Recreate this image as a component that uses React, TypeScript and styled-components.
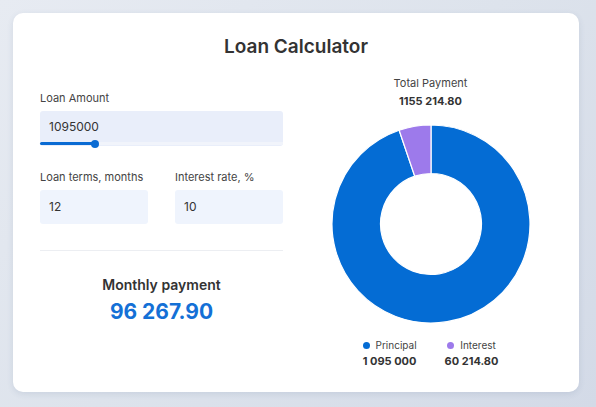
import React from "react";
import styled, { createGlobalStyle } from "styled-components";

const GlobalStyle = createGlobalStyle`
  html, body { margin: 0; padding: 0; }
  body {
    width: 596px;
    height: 407px;
    overflow: hidden;
    background: linear-gradient(135deg, #e7ebf2 0%, #dde3ec 50%, #d3dae7 100%);
    font-family: Inter, "Open Sans", sans-serif;
    color: #333;
  }
  * { box-sizing: border-box; }
`;

const Page = styled.div`
  padding: 13px 17px 15px 13px;
`;

const Card = styled.div`
  width: 566px;
  height: 379px;
  background: #fff;
  border-radius: 10px;
  box-shadow: 0 2px 6px rgba(60, 80, 120, 0.12);
  padding: 20px 27px 0 27px;
`;

const Title = styled.h1`
  margin: 0 0 14px 0;
  font-size: 19px;
  line-height: 28px;
  font-weight: 600;
  text-align: center;
  color: #333;
`;

const Columns = styled.div`
  display: grid;
  grid-template-columns: 243px 243px;
  column-gap: 26px;
`;

const Left = styled.div`
  padding-top: 15px;
  display: flex;
  flex-direction: column;
`;

const Label = styled.label`
  display: block;
  font-size: 11px;
  line-height: 16px;
  color: #444;
  margin-bottom: 5px;
`;

const FieldWrap = styled.div`
  position: relative;
`;

const Input = styled.div<{ $h: number; $bg: string }>`
  height: ${(p) => p.$h}px;
  background: ${(p) => p.$bg};
  border-radius: 3px;
  padding: 0 9px;
  display: flex;
  align-items: center;
  font-size: 12px;
  color: #333;
  padding-bottom: ${(p) => (p.$h > 34 ? 4 : 1)}px;
`;

const SliderTrack = styled.div`
  position: absolute;
  left: 0;
  right: 0;
  bottom: 1px;
  height: 3px;
  background: #f1f4fb;
`;

const SliderFill = styled.div`
  position: absolute;
  left: 0;
  top: 0;
  height: 3px;
  background: #0a6bd3;
  border-radius: 2px;
`;

const Thumb = styled.div`
  position: absolute;
  top: 50%;
  width: 8px;
  height: 8px;
  margin-left: -4px;
  margin-top: -4px;
  border-radius: 50%;
  background: #0a6bd3;
`;

const Row = styled.div`
  display: grid;
  grid-template-columns: 108px 108px;
  column-gap: 27px;
  margin-top: 23px;
`;

const Divider = styled.hr`
  border: none;
  border-top: 1px solid #eceef2;
  margin: 26px 0 0 0;
`;

const Result = styled.div`
  text-align: center;
  padding-top: 25px;
`;

const ResultLabel = styled.div`
  font-size: 14px;
  line-height: 18px;
  font-weight: 600;
  color: #333;
`;

const ResultValue = styled.div`
  font-size: 21px;
  line-height: 28px;
  font-weight: 700;
  color: #1470d6;
  margin-top: 4px;
`;

const Right = styled.div`
  display: flex;
  flex-direction: column;
  align-items: center;
`;

const SmallLabel = styled.div`
  font-size: 11px;
  line-height: 16px;
  color: #444;
`;

const SmallValue = styled.div`
  font-size: 11px;
  line-height: 16px;
  font-weight: 700;
  color: #333;
  margin-top: 2px;
`;

const ChartBox = styled.div`
  margin-top: 15px;
  width: 200px;
  height: 200px;
`;

const Legend = styled.div`
  display: flex;
  gap: 28px;
  margin-top: 14px;
`;

const LegendItem = styled.div`
  display: flex;
  flex-direction: column;
  align-items: center;
`;

const LegendKey = styled.div`
  display: flex;
  align-items: center;
  gap: 6px;
  font-size: 10px;
  line-height: 14px;
  color: #444;
`;

const Dot = styled.span<{ $c: string }>`
  width: 7px;
  height: 7px;
  border-radius: 50%;
  background: ${(p) => p.$c};
`;

const LegendValue = styled.div`
  font-size: 11px;
  line-height: 16px;
  font-weight: 700;
  color: #333;
  margin-top: 1px;
`;

const BLUE = "#046cd4";
const PURPLE = "#9d7aeb";

function arc(cx: number, cy: number, R: number, r: number, a0: number, a1: number) {
  const rad = (d: number) => (d * Math.PI) / 180;
  const p = (rr: number, a: number) => [cx + rr * Math.sin(rad(a)), cy - rr * Math.cos(rad(a))];
  const large = a1 - a0 > 180 ? 1 : 0;
  const [x0, y0] = p(R, a0);
  const [x1, y1] = p(R, a1);
  const [x2, y2] = p(r, a1);
  const [x3, y3] = p(r, a0);
  return `M${x0} ${y0} A${R} ${R} 0 ${large} 1 ${x1} ${y1} L${x2} ${y2} A${r} ${r} 0 ${large} 0 ${x3} ${y3} Z`;
}

const Donut: React.FC<{ principal: number; interest: number }> = ({ principal, interest }) => {
  const total = principal + interest;
  const split = (principal / total) * 360;
  return (
    <svg width="200" height="200" viewBox="0 0 200 200">
      <path d={arc(100, 100, 99, 50.5, 0, split)} fill={BLUE} stroke="#fff" strokeWidth={1.2} />
      <path d={arc(100, 100, 99, 50.5, split, 360)} fill={PURPLE} stroke="#fff" strokeWidth={1.2} />
    </svg>
  );
};

export default function App() {
  const amount = 1095000;
  const pct = 22.5;
  return (
    <Page>
      <GlobalStyle />
      <Card>
        <Title>Loan Calculator</Title>
        <Columns>
          <Left>
            <Label>Loan Amount</Label>
            <FieldWrap>
              <Input $h={35} $bg="#e9eefa">{amount}</Input>
              <SliderTrack>
                <SliderFill style={{ width: `${pct}%` }} />
                <Thumb style={{ left: `${pct}%` }} />
              </SliderTrack>
            </FieldWrap>
            <Row>
              <div>
                <Label>Loan terms, months</Label>
                <Input $h={34} $bg="#eff4fd">12</Input>
              </div>
              <div>
                <Label>Interest rate, %</Label>
                <Input $h={34} $bg="#eff4fd">10</Input>
              </div>
            </Row>
            <Divider />
            <Result>
              <ResultLabel>Monthly payment</ResultLabel>
              <ResultValue>96 267.90</ResultValue>
            </Result>
          </Left>
          <Right>
            <SmallLabel>Total Payment</SmallLabel>
            <SmallValue>1155 214.80</SmallValue>
            <ChartBox>
              <Donut principal={1095000} interest={60214.8} />
            </ChartBox>
            <Legend>
              <LegendItem>
                <LegendKey>
                  <Dot $c={BLUE} />
                  Principal
                </LegendKey>
                <LegendValue>1 095 000</LegendValue>
              </LegendItem>
              <LegendItem>
                <LegendKey>
                  <Dot $c={PURPLE} />
                  Interest
                </LegendKey>
                <LegendValue>60 214.80</LegendValue>
              </LegendItem>
            </Legend>
          </Right>
        </Columns>
      </Card>
    </Page>
  );
}
